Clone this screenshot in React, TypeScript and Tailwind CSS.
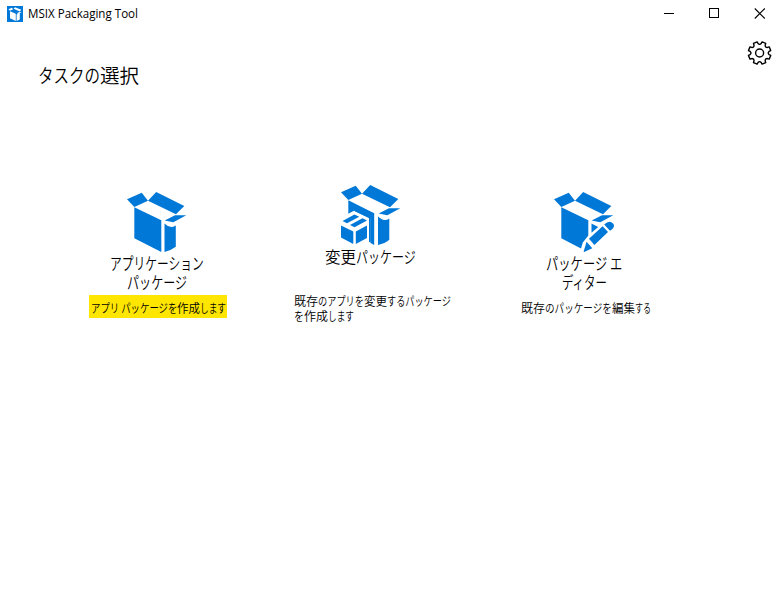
import { useLayoutEffect, useRef, useState } from "react";

// A run of text condensed horizontally to the given width.
function Run({ text, width }: { text: string; width: number }) {
  const ref = useRef<HTMLSpanElement>(null);
  const [scale, setScale] = useState(1);
  useLayoutEffect(() => {
    if (ref.current) setScale(width / ref.current.offsetWidth);
  }, [text, width]);
  return (
    <span className="inline-block whitespace-nowrap" style={{ width }}>
      <span ref={ref} className="inline-block origin-left" style={{ transform: `scaleX(${scale})` }}>
        {text}
      </span>
    </span>
  );
}

function BoxTop() {
  return (
    <>
      <path d="M0 7.3 14.7.8 21 8.7 7.3 15Z" />
      <path d="M21 8.7 29.2 0 57.3 14 49 22.2Z" />
      <path d="M37.7 28.4 48 23.3 59.3 23.3 46.3 30.2Z" />
    </>
  );
}

function PackageIcon() {
  return (
    <svg viewBox="0 0 60 60" className="size-[60px] fill-[#0078d7]">
      <BoxTop />
      <path d="M7.3 15.2 34.3 28.2V60L7.3 46.3Z" />
      <path d="M37.5 31.4Q41 35 44.5 35 46 35 48.8 33.4V54.8Q44 58.5 37.5 60Z" />
    </svg>
  );
}

function ModifyIcon() {
  return (
    <svg viewBox="0 0 60 60" className="size-[60px] fill-[#0078d7]">
      <BoxTop />
      <path d="M7.3 15.2 33.2 28.2V60L7.3 46.3Z" />
      <path d="M37 31.4Q41 35 44.5 35 46 35 48.3 33.4V54.8Q44 58.5 37 60Z" />
      <path d="M-3 34 13 25.8 29.3 33.5V62H-3Z" className="fill-white" />
      <path d="M14 26.2V25L29.6 32.2V56.5L28 57.3V33Z" />
      <path d="M0 40.5 12.3 46.5V59L0 52.5Z" />
      <path d="M14.8 46.5 26 40.5V53L14.8 59Z" />
      <path d="M1.5 36 13.5 29.5 18.2 31.8 6 38.2Z" />
      <path d="M9 40 21.5 33.2 26 35.5 13.5 42.2Z" />
    </svg>
  );
}

function EditorIcon() {
  return (
    <svg viewBox="0 0 60 60" className="size-[60px] fill-[#0078d7]">
      <BoxTop />
      <path d="M7.3 15.2 34.3 28.2V43.5L28.8 50.5 27 56.5 7.3 46.3Z" />
      <path d="M37.5 31.5 44.2 35 37.5 40.8Z" />
      <path d="M35 46.8 48.6 34.2 54 40 40.4 53Z" />
      <path d="M50.2 32.5Q55.5 27.5 59 31.5Q62 34.5 56 38.7Z" />
      <path d="M32.6 49.8 38.3 56.2 30.2 60 29.6 59.5Z" />
    </svg>
  );
}

function AppLogo() {
  return (
    <svg viewBox="0 0 16 16" className="size-4">
      <path fill="#0078d7" d="M0 0h16v16H0z" />
      <path
        fill="#fff"
        d="M1.5 3.2 4.8 1.7 6.2 3.2 3 4.8ZM6.6 2.8 8 1.2 14.3 3.8 12.8 5.5ZM3 5.3 8.8 7.8V15L3 12.2ZM9.6 8.5 12.8 7V13.5L9.6 15ZM9.6 7.2 12.5 5.9H14.8L11.5 7.7Z"
      />
    </svg>
  );
}

function GearIcon() {
  const teeth = 8;
  const points: string[] = [];
  for (let i = 0; i < teeth; i++) {
    const at = (r: number, deg: number) => {
      const a = ((i * 45 + 22.5 + deg) * Math.PI) / 180;
      return `${(11.6 + r * Math.sin(a)).toFixed(2)} ${(12 - r * Math.cos(a)).toFixed(2)}`;
    };
    points.push(
      `${i === 0 ? "M" : "L"}${at(9.6, -13)}L${at(11.4, -10)}L${at(11.4, 10)}L${at(9.6, 13)}Q${at(7.8, 22.5)} ${at(9.6, 32)}`,
    );
  }
  return (
    <svg viewBox="0 0 24 24" className="size-6 overflow-visible fill-none stroke-black" strokeWidth="1.4" strokeLinejoin="round">
      <path d={points.join("") + "Z"} />
      <circle cx="11.6" cy="12" r="4" />
    </svg>
  );
}

export default function App() {
  return (
    <div className="h-[589px] w-[781px] overflow-hidden bg-white font-['Noto_Sans_CJK_JP',sans-serif] font-[350] text-black">
      <header className="flex h-[27px] items-center pl-[7px]">
        <AppLogo />
        <h1 className="ml-[5px] font-['Open_Sans',sans-serif] text-[12px] leading-[27px] font-normal">
          <Run text="MSIX Packaging Tool" width={110} />
        </h1>
        <div className="ml-auto flex items-center gap-[34px] pr-[16px]">
          <svg viewBox="0 0 11 11" className="size-[11px] stroke-black" shapeRendering="crispEdges">
            <path d="M0 5.5h10" />
          </svg>
          <svg viewBox="0 0 11 11" className="size-[11px] fill-none stroke-black" shapeRendering="crispEdges">
            <path d="M.5.5h9v9h-9z" />
          </svg>
          <svg viewBox="0 0 11 11" className="size-[11px] overflow-visible stroke-black" strokeWidth="1.1">
            <path d="m.8.5 10 10m0-10-10 10" />
          </svg>
        </div>
      </header>

      <div className="flex h-[158px] justify-between pr-[9.5px] pl-[38px]">
        <h2 className="mt-[34px] text-[19px] leading-[28px]">
          <Run text="タスクの" width={62} />
          <Run text="選択" width={39} />
        </h2>
        <button className="mt-[14px] h-6" aria-label="設定">
          <GearIcon />
        </button>
      </div>

      <main className="flex">
        <section className="ml-[89px] flex w-[138px] flex-col pt-[7px]">
          <div className="ml-[38px]">
            <PackageIcon />
          </div>
          <h3 className="flex w-[136px] flex-col items-center pt-[2px] text-[16.5px] leading-[19px]">
            <Run text="アプリケーション" width={94} />
            <Run text="パッケージ" width={60} />
          </h3>
          <p className="mt-[3px] h-[23px] w-[138px] bg-[#ffe600] pl-[2px] text-[12px] leading-[25px]">
            <Run text="アプリ パッケージを" width={86} />
            <Run text="作成" width={23} />
            <Run text="します" width={26} />
          </p>
        </section>

        <section className="ml-[67px] flex w-[160px] flex-col">
          <div className="ml-[47px]">
            <ModifyIcon />
          </div>
          <h3 className="ml-[31px] pt-[2px] text-[16px] leading-[19px]">
            <Run text="変更" width={31} />
            <Run text="パッケージ" width={60} />
          </h3>
          <p className="mt-[27px] flex flex-col text-[12px] leading-[15px]">
            <span>
              <Run text="既存" width={24} />
              <Run text="のアプリを" width={46} />
              <Run text="変更" width={23} />
              <Run text="するパッケージ" width={64} />
            </span>
            <span>
              <Run text="を" width={10} />
              <Run text="作成" width={24} />
              <Run text="します" width={26} />
            </span>
          </p>
        </section>

        <section className="ml-[67px] flex w-[132px] flex-col pt-[7px]">
          <div className="ml-[33px]">
            <EditorIcon />
          </div>
          <h3 className="flex w-[126px] flex-col items-center pt-[2px] text-[16.5px] leading-[19px]">
            <Run text="パッケージ エ" width={76} />
            <Run text="ディター" width={45} />
          </h3>
          <p className="mt-[3px] text-[12px] leading-[25px]">
            <Run text="既存" width={24} />
            <Run text="のパッケージを" width={67} />
            <Run text="編集" width={23} />
            <Run text="する" width={16} />
          </p>
        </section>
      </main>
    </div>
  );
}
